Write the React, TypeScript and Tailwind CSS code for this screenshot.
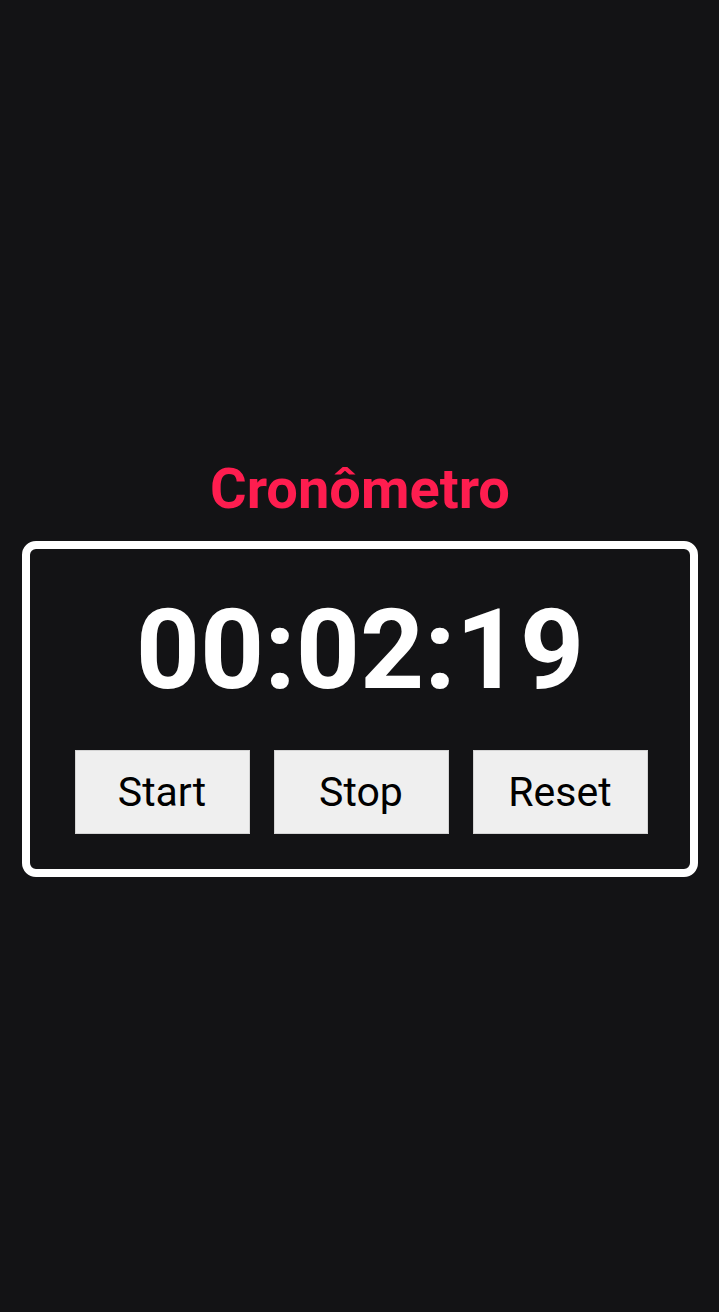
import { useEffect, useRef, useState } from "react";

const pad = (n: number) => String(n).padStart(2, "0");

function format(total: number) {
    const h = Math.floor(total / 3600);
    const m = Math.floor((total % 3600) / 60);
    const s = total % 60;
    return `${pad(h)}:${pad(m)}:${pad(s)}`;
}

export default function App() {
    const [seconds, setSeconds] = useState(139);
    const [running, setRunning] = useState(false);
    const timer = useRef<number | null>(null);

    useEffect(() => {
        if (!running) return;
        timer.current = window.setInterval(() => setSeconds(s => s + 1), 1000);
        return () => {
            if (timer.current) window.clearInterval(timer.current);
        };
    }, [running]);

    const buttons = [
        { label: "Start", onClick: () => setRunning(true) },
        { label: "Stop", onClick: () => setRunning(false) },
        { label: "Reset", onClick: () => { setRunning(false); setSeconds(0); } },
    ];

    return (
        <div className="min-h-screen bg-[#131315] flex flex-col items-center justify-center pl-[22px] pr-[21px] pt-[22px] font-['Roboto',sans-serif]">
            <h1 className="text-[#fe1d4f] font-bold text-[56px] leading-[64px] mb-[20px]">Cronômetro</h1>
            <div className="w-full border-[8px] border-white rounded-[14px] flex flex-col items-center pt-[45px] pb-[35px]">
                <div className="text-white font-bold text-[112px] leading-none">{format(seconds)}</div>
                <div className="flex gap-6 mt-[44px] translate-x-[1px]">
                    {buttons.map(b => (
                        <button
                            key={b.label}
                            onClick={b.onClick}
                            className="w-[175px] h-[84px] bg-[#efefef] border border-[#d4d4d4] text-black text-[41px] leading-none"
                        >
                            {b.label}
                        </button>
                    ))}
                </div>
            </div>
        </div>
    );
}
